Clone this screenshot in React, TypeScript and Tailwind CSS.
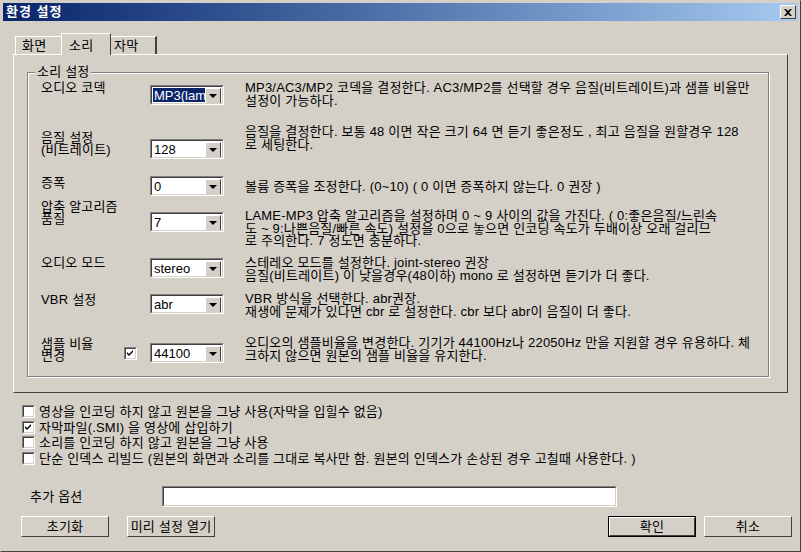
import React from "react";

const F = { fontFamily: '"Liberation Sans","Noto Sans CJK KR",sans-serif' };

function Combo({ value, sel }: { value: string; sel?: boolean }) {
  return (
    <div className="w-[74px] h-[20px] bg-white flex border-t border-l border-t-[#808080] border-l-[#808080] border-b border-r border-b-white border-r-white">
      <div className="flex-1 flex border-t border-l border-t-[#404040] border-l-[#404040] border-b border-r border-b-[#d4d0c8] border-r-[#d4d0c8] p-[1px] overflow-hidden">
        <div className={`flex-1 overflow-hidden whitespace-nowrap text-[13px] leading-[15px] pl-[1px] tracking-normal ${sel ? "bg-[#0a246a] text-white" : "text-black"}`}>{value}</div>
        <div className="w-[16px] h-[16px] bg-[#d4d0c8] border-t border-l border-white border-b border-r border-b-[#404040] border-r-[#404040] flex items-center justify-center">
          <div className="w-0 h-0 border-l-[4px] border-r-[4px] border-t-[4px] border-l-transparent border-r-transparent border-t-black" />
        </div>
      </div>
    </div>
  );
}

function Check({ on }: { on?: boolean }) {
  return (
    <div className="w-[13px] h-[13px] bg-white border-t border-l border-t-[#808080] border-l-[#808080] border-b border-r border-b-white border-r-white shrink-0">
      <div className="w-full h-full border-t border-l border-t-[#404040] border-l-[#404040] border-b border-r border-b-[#d4d0c8] border-r-[#d4d0c8] flex items-center justify-center">
        {on && (
          <svg width="7" height="7" viewBox="0 0 7 7"><path d="M0 2 L2 4 L6 0 L6 2 L2 6 L0 4 Z" fill="black" /></svg>
        )}
      </div>
    </div>
  );
}

function Btn({ label, def, w }: { label: string; def?: boolean; w: string }) {
  return (
    <div className={`${w} h-[21px] ${def ? "border border-black" : ""}`}>
      <div className="w-full h-full border-t border-l border-white border-b border-r border-b-[#404040] border-r-[#404040] flex items-center justify-center text-[13px] text-black">
        {label}
      </div>
    </div>
  );
}

type Row = { h: number; label: string[]; lt: number; ct: number; dt: number; val: string; desc: string[]; sel?: boolean; chk?: boolean };
const rows: Row[] = [
  { h: 44, label: ["오디오 코덱"], lt: 0, ct: 3, dt: 0, val: "MP3(lame)", sel: true, desc: ["MP3/AC3/MP2 코덱을 결정한다. AC3/MP2를 선택할 경우 음질(비트레이트)과 샘플 비율만", "설정이 가능하다."] },
  { h: 49, label: ["음질 설정", "(비트레이트)"], lt: 6, ct: 13, dt: 0, val: "128", desc: ["음질을 결정한다. 보통 48 이면 작은 크기  64 면 듣기 좋은정도 ,  최고 음질을 원할경우 128", "로 세팅한다."] },
  { h: 25, label: ["증폭"], lt: 2, ct: 1, dt: 6, val: "0", desc: ["볼륨 증폭을 조정한다. (0~10) ( 0 이면 증폭하지 않는다. 0 권장 )"] },
  { h: 56, label: ["압축 알고리즘", "품질"], lt: 1, ct: 12, dt: 10, val: "7", desc: ["LAME-MP3 압축 알고리즘을 설정하며  0 ~ 9 사이의 값을 가진다. ( 0:좋은음질/느린속", "도 ~ 9:나쁜음질/빠른 속도)  설정을 0으로 놓으면 인코딩 속도가 두배이상 오래 걸리므", "로 주의한다.  7 정도면 충분하다."] },
  { h: 36, label: ["오디오 모드"], lt: 1, ct: 2, dt: 1, val: "stereo", desc: ["스테레오 모드를 설정한다. joint-stereo 권장", "음질(비트레이트) 이 낮을경우(48이하) mono 로 설정하면 듣기가 더 좋다."] },
  { h: 44, label: ["VBR 설정"], lt: 2, ct: 2, dt: 1, val: "abr", desc: ["VBR 방식을 선택한다. abr권장.", "재생에 문제가 있다면 cbr 로 설정한다. cbr 보다 abr이 음질이 더 좋다."] },
  { h: 41, label: ["샘플 비율", "변경"], lt: 2, ct: 7, dt: 1, val: "44100", chk: true, desc: ["오디오의 샘플비율을 변경한다. 기기가 44100Hz나 22050Hz 만을 지원할 경우 유용하다. 체", "크하지 않으면 원본의 샘플 비율을 유지한다."] },
];

export default function App() {
  return (
    <div style={F} className="w-[801px] h-[552px] bg-[#d4d0c8] border border-t-[#d4d0c8] border-l-[#d4d0c8] border-b-[#404040] border-r-[#404040] overflow-hidden text-black text-[13px] tracking-[0.2px] relative">
      <div className="mx-[2px] mt-[2px] h-[18px] bg-gradient-to-r from-[#0a246a] to-[#a6caf0] flex items-center justify-between pl-[3px] pr-[2px]">
        <span className="text-white font-bold text-[13px] tracking-[1px]">환경 설정</span>
        <div className="w-[16px] h-[14px] bg-[#d4d0c8] border-t border-l border-white border-b border-r border-b-[#404040] border-r-[#404040] flex items-center justify-center">
          <svg width="8" height="7" viewBox="0 0 8 7"><path d="M0 0 L2 0 L4 2 L6 0 L8 0 L5 3.5 L8 7 L6 7 L4 5 L2 7 L0 7 L3 3.5 Z" fill="black" /></svg>
        </div>
      </div>

      <div className="ml-[12px] mt-[12px] flex items-end h-[21px]">
        <div className="w-[48px] h-[18px] ml-[2px] border-t border-l border-white border-r border-r-[#404040] flex items-center pl-[6px]">화면</div>
        <div className="w-[50px] -ml-[2px] border-t border-l border-white border-r border-r-[#404040] bg-[#d4d0c8] relative z-10 mb-[-1px] h-[22px] flex items-start pt-[2px] pl-[7px]">소리</div>
        <div className="w-[46px] h-[18px] border-t border-white border-r-2 border-r-[#404040] flex items-center pl-[3px]">자막</div>
      </div>
      <div className="ml-[12px] w-[775px] h-[339px] border-t border-l border-white border-b border-r border-b-[#404040] border-r-[#404040] relative">
        <div className="absolute left-[13px] top-[17px] w-[742px] h-[305px] border border-[#808080] shadow-[1px_1px_0_0_white,inset_1px_1px_0_0_white]" />
        <div className="absolute left-[21px] top-[9px] px-[2px] bg-[#d4d0c8] leading-[15px]">소리 설정</div>
        <div className="relative pt-[27px] pl-[27px]">
          {rows.map((r, i) => (
            <div key={i} className="flex" style={{ height: r.h }}>
              <div className="w-[82px] leading-[12px] whitespace-nowrap" style={{ marginTop: r.lt }}>
                {r.label.map((l, j) => <div key={j}>{l}</div>)}
              </div>
              <div className="w-[27px] flex justify-start" style={{ marginTop: r.ct + 4 }}>
                {r.chk && <div className="ml-[1px]"><Check on /></div>}
              </div>
              <div style={{ marginTop: r.ct }}><Combo value={r.val} sel={r.sel} /></div>
              <div className="ml-[21px] leading-[12.5px] whitespace-nowrap" style={{ marginTop: r.dt }}>
                {r.desc.map((d, j) => <div key={j}>{d}</div>)}
              </div>
            </div>
          ))}
        </div>
      </div>

      <div className="ml-[21px] mt-[12px] flex flex-col gap-[2px] leading-[13.5px]">
        {[
          ["영상을 인코딩 하지 않고 원본을 그냥 사용(자막을 입힐수 없음)", false],
          ["자막파일(.SMI) 을 영상에 삽입하기", true],
          ["소리를 인코딩 하지 않고 원본을 그냥 사용", false],
          ["단순 인덱스 리빌드 (원본의 화면과 소리를 그대로 복사만 함. 원본의 인덱스가 손상된 경우 고칠때 사용한다. )", false],
        ].map(([t, on], i) => (
          <div key={i} className="flex items-center gap-[4px] whitespace-nowrap">
            <Check on={on as boolean} />
            <span>{t as string}</span>
          </div>
        ))}
      </div>

      <div className="mt-[21px] flex items-center h-[21px]">
        <span className="ml-[29px] w-[132px]">추가 옵션</span>
        <div className="w-[455px] h-[21px] bg-white border-t border-l border-[#808080] border-b border-r border-b-white border-r-white">
          <div className="w-full h-full border-t border-l border-[#404040] border-b border-r border-b-[#d4d0c8] border-r-[#d4d0c8]" />
        </div>
      </div>

      <div className="mt-[9px] flex items-center">
        <div className="ml-[20px]"><Btn label="초기화" w="w-[88px]" /></div>
        <div className="ml-[18px]"><Btn label="미리 설정 열기" w="w-[88px]" /></div>
        <div className="ml-[393px]"><Btn label="확인" def w="w-[88px]" /></div>
        <div className="ml-[8px]"><Btn label="취소" w="w-[88px]" /></div>
      </div>
    </div>
  );
}
